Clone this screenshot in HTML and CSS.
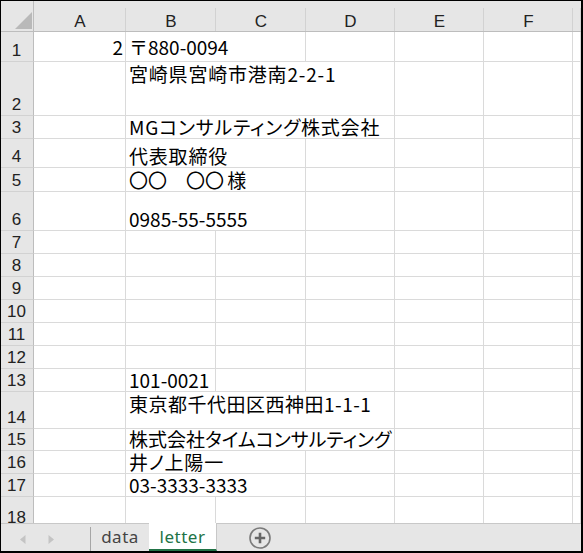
FILE: index.html
```html
<!DOCTYPE html>
<html lang="ja">
<head>
<meta charset="utf-8">
<title>letter</title>
<link rel="stylesheet" href="styles.css">
</head>
<body>
<div class="frame">
  <div class="sheet">
    <div class="grid">
      <div class="corner"><span class="tri"></span></div>
      <div class="ch">A</div><div class="ch">B</div><div class="ch">C</div><div class="ch">D</div><div class="ch">E</div><div class="ch">F</div><div class="ch"></div>

      <div class="rh">1</div>
      <div class="c r1 num">2</div><div class="c r1 s2">〒880-0094</div><div class="c"></div><div class="c"></div><div class="c"></div><div class="c"></div>

      <div class="rh">2</div>
      <div class="c"></div><div class="c top s3 k">宮崎県宮崎市港南2-2-1</div><div class="c"></div><div class="c"></div><div class="c"></div>

      <div class="rh">3</div>
      <div class="c"></div><div class="c s3 k">MGコンサルティング株式会社</div><div class="c"></div><div class="c"></div><div class="c"></div>

      <div class="rh">4</div>
      <div class="c"></div><div class="c s2 k">代表取締役</div><div class="c"></div><div class="c"></div><div class="c"></div><div class="c"></div>

      <div class="rh">5</div>
      <div class="c"></div><div class="c s2 circ">〇〇　〇〇 様</div><div class="c"></div><div class="c"></div><div class="c"></div><div class="c"></div>

      <div class="rh">6</div>
      <div class="c"></div><div class="c s2">0985-55-5555</div><div class="c"></div><div class="c"></div><div class="c"></div><div class="c"></div>

      <div class="rh">7</div>
      <div class="c"></div><div class="c"></div><div class="c"></div><div class="c"></div><div class="c"></div><div class="c"></div><div class="c"></div>
      <div class="rh">8</div>
      <div class="c"></div><div class="c"></div><div class="c"></div><div class="c"></div><div class="c"></div><div class="c"></div><div class="c"></div>
      <div class="rh">9</div>
      <div class="c"></div><div class="c"></div><div class="c"></div><div class="c"></div><div class="c"></div><div class="c"></div><div class="c"></div>
      <div class="rh">10</div>
      <div class="c"></div><div class="c"></div><div class="c"></div><div class="c"></div><div class="c"></div><div class="c"></div><div class="c"></div>
      <div class="rh">11</div>
      <div class="c"></div><div class="c"></div><div class="c"></div><div class="c"></div><div class="c"></div><div class="c"></div><div class="c"></div>
      <div class="rh">12</div>
      <div class="c"></div><div class="c"></div><div class="c"></div><div class="c"></div><div class="c"></div><div class="c"></div><div class="c"></div>

      <div class="rh">13</div>
      <div class="c"></div><div class="c">101-0021</div><div class="c"></div><div class="c"></div><div class="c"></div><div class="c"></div><div class="c"></div>

      <div class="rh">14</div>
      <div class="c"></div><div class="c top s3 k2">東京都千代田区西神田1-1-1</div><div class="c"></div><div class="c"></div><div class="c"></div>

      <div class="rh">15</div>
      <div class="c"></div><div class="c s3 kana">株式会社タイムコンサルティング</div><div class="c"></div><div class="c"></div><div class="c"></div>

      <div class="rh">16</div>
      <div class="c"></div><div class="c s2 k">井ノ上陽一</div><div class="c"></div><div class="c"></div><div class="c"></div><div class="c"></div>

      <div class="rh">17</div>
      <div class="c"></div><div class="c s2">03-3333-3333</div><div class="c"></div><div class="c"></div><div class="c"></div><div class="c"></div>

      <div class="rh">18</div>
      <div class="c"></div><div class="c"></div><div class="c"></div><div class="c"></div><div class="c"></div><div class="c"></div><div class="c"></div>
    </div>
  </div>
  <div class="tabbar">
    <div class="navs">
      <svg class="nav" width="6" height="9" viewBox="0 0 6 9"><polygon points="5.5,0 0,4.5 5.5,9" fill="#c4c4c4"/></svg>
      <svg class="nav" width="6" height="9" viewBox="0 0 6 9"><polygon points="0.5,0 6,4.5 0.5,9" fill="#c4c4c4"/></svg>
    </div>
    <div class="tab">data</div>
    <div class="tab active">letter</div>
    <div class="add">
      <svg width="24" height="24" viewBox="0 0 24 24">
        <circle cx="12" cy="12" r="10" fill="none" stroke="#7a7a7a" stroke-width="1.6"/>
        <path d="M12 6.8v10.4M6.8 12h10.4" stroke="#666" stroke-width="2.6" fill="none"/>
      </svg>
    </div>
  </div>
</div>
</body>
</html>
```

FILE: styles.css
```css
html, body {
  margin: 0;
  padding: 0;
  background: #fff;
}

.frame {
  width: 583px;
  height: 553px;
  box-sizing: border-box;
  border-top: 1px solid #000;
  border-left: 1px solid #000;
  border-right: 2px solid #000;
  border-bottom: 2px solid #000;
  display: flex;
  flex-direction: column;
  overflow: hidden;
}

.sheet {
  height: 522px;
  overflow: hidden;
  flex: none;
}

.grid {
  display: grid;
  grid-template-columns: 33px 92px 90px 90px 89px 89px 89px 8px;
  grid-template-rows: 31px 30px 54px 23px 29px 24px 39px 23px 23px 23px 23px 23px 23px 23px 37px 22px 23px 23px 32px;
}

.corner {
  background: #e6e6e6;
  border-right: 1px solid #bdbdbd;
  border-bottom: 1px solid #bdbdbd;
  box-sizing: border-box;
  position: relative;
}

.tri {
  position: absolute;
  right: 1px;
  bottom: 2px;
  width: 0;
  height: 0;
  border-left: 17px solid transparent;
  border-bottom: 17px solid #b9b9b9;
}

.ch {
  background: #e6e6e6;
  border-bottom: 1px solid #bdbdbd;
  box-sizing: border-box;
  position: relative;
  display: flex;
  align-items: flex-end;
  justify-content: center;
  font-family: "Liberation Sans", Arial, sans-serif;
  font-size: 17px;
  line-height: 17px;
  padding-bottom: 1px;
  color: #222;
}

.ch::after {
  content: "";
  position: absolute;
  right: 0;
  top: 7px;
  bottom: 0;
  width: 1px;
  background: #d2d2d2;
}

.rh {
  background: #e6e6e6;
  border-right: 1px solid #bdbdbd;
  border-bottom: 1px solid #d2d2d2;
  box-sizing: border-box;
  display: flex;
  align-items: flex-end;
  justify-content: center;
  font-family: "Liberation Sans", Arial, sans-serif;
  font-size: 17px;
  line-height: 17px;
  padding-bottom: 2px;
  padding-right: 1px;
  color: #222;
}

.c {
  border-right: 1px solid #dadada;
  border-bottom: 1px solid #dadada;
  box-sizing: border-box;
  display: flex;
  align-items: flex-end;
  padding: 0 2px 2px 3px;
  white-space: nowrap;
  font-family: "Noto Sans CJK JP", "Noto Sans", sans-serif;
  font-size: 19px;
  line-height: 19px;
  color: #000;
}

.s2 { grid-column: span 2; }
.s3 { grid-column: span 3; }

.k {
  font-feature-settings: "palt";
  letter-spacing: 0.8px;
}

.k2 {
  font-feature-settings: "palt";
  letter-spacing: 0.5px;
}

.kana {
  font-feature-settings: "palt";
  letter-spacing: 0;
}

.circ {
  word-spacing: -1px;
}

.num { justify-content: flex-end; }
.r1 { padding-bottom: 5px; }

.top {
  align-items: flex-start;
  padding-top: 2px;
}

.tabbar {
  height: 28px;
  flex: none;
  background: #e6e6e6;
  display: flex;
  align-items: stretch;
  position: relative;
  font-family: "Noto Sans", "Liberation Sans", sans-serif;
  font-size: 17px;
  letter-spacing: 0.5px;
}

.tabbar::before {
  content: "";
  position: absolute;
  left: 0;
  right: 0;
  top: 0;
  height: 1px;
  background: #c8c8c8;
}

.navs {
  width: 90px;
  display: flex;
  align-items: center;
  padding-left: 19px;
  gap: 22px;
  box-sizing: border-box;
  border-right: 1px solid #a6a6a6;
  margin: 4px 0 0;
}

.nav { display: block; }

.tab {
  width: 58px;
  display: flex;
  align-items: center;
  justify-content: center;
  color: #444;
  padding-bottom: 2px;
  box-sizing: border-box;
}

.tab.active {
  width: 68px;
  background: #fff;
  color: #217346;
  position: relative;
  z-index: 1;
  border-right: 1px solid #c8c8c8;
  border-bottom: 2px solid #217346;
  padding-bottom: 0;
}

.add {
  width: 86px;
  display: flex;
  align-items: center;
  justify-content: center;
  padding-top: 2px;
}
```
